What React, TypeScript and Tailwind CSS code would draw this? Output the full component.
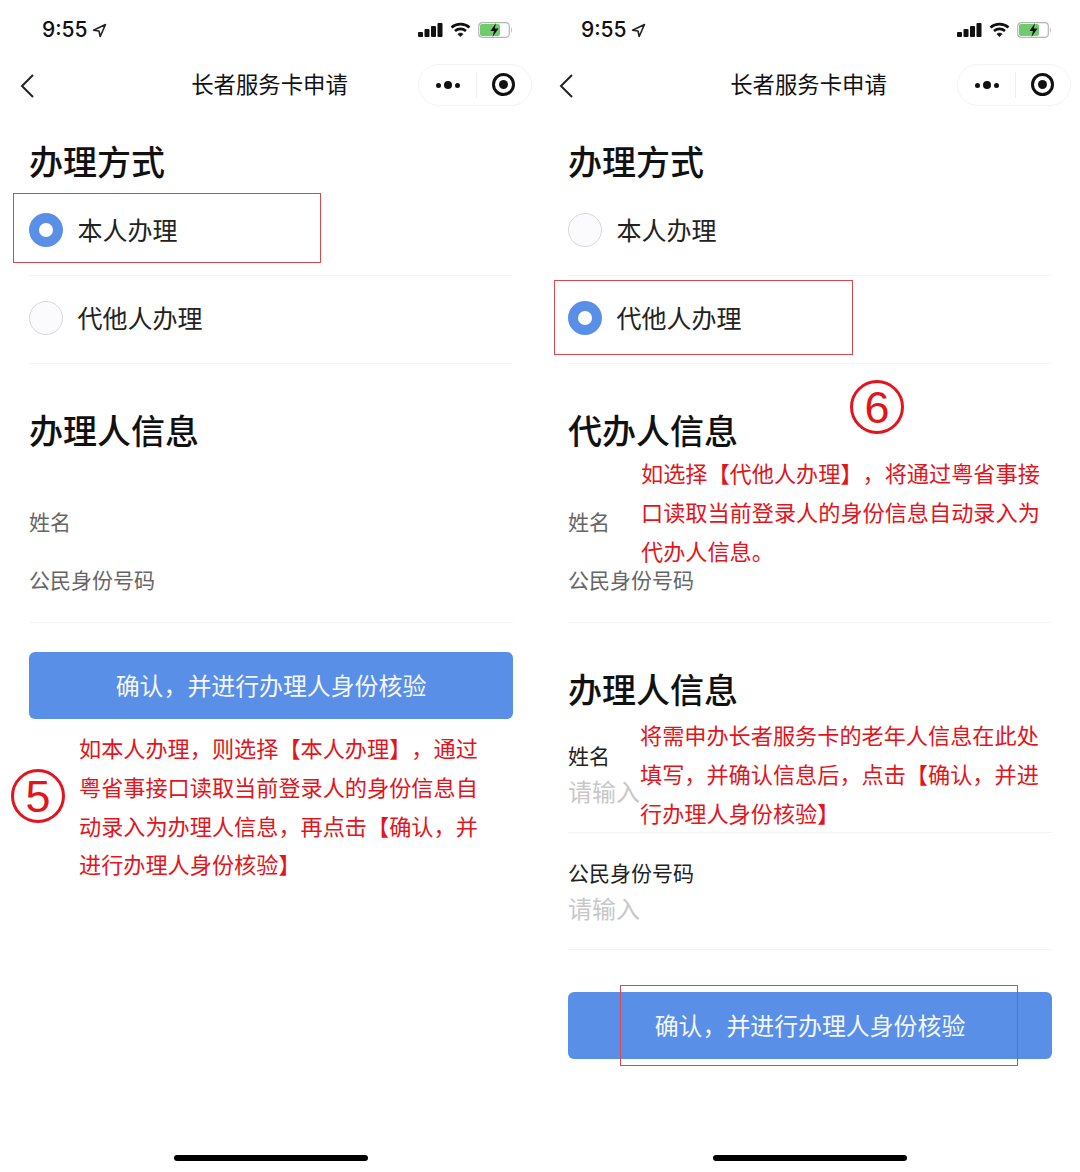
const FONT = "font-['Noto_Sans_CJK_SC','Noto_Sans',sans-serif]";

function StatusBar() {
  return (
    <div className="h-[64px] pl-[42px] pr-[26px] pt-[15px] flex items-start justify-between">
      <div className="flex items-center h-[30px] gap-[4px]">
        <span className="font-['Inter',sans-serif] text-[21px] font-medium leading-[30px] text-[#111]">9:55</span>
        <svg width="15" height="15" viewBox="0 0 15 15" fill="none" stroke="#222" strokeWidth="1.6" strokeLinejoin="round">
          <path d="M1.5 7.2 13.5 1.5 8.2 13.5 7 8z" />
        </svg>
      </div>
      <div className="flex items-center h-[30px] gap-[7px]">
        <svg width="25" height="16" viewBox="0 0 25 16" fill="#111">
          <rect x="0" y="10" width="5" height="5" rx="1" />
          <rect x="6.500" y="7" width="5" height="8" rx="1" />
          <rect x="13" y="4" width="5" height="11" rx="1" />
          <rect x="19.500" y="1" width="5" height="14" rx="1" />
        </svg>
        <svg width="21" height="16" viewBox="0 0 21 16" fill="none" stroke="#111" strokeWidth="2.600">
          <path d="M1.500 5.500C6.500 1 14.500 1 19.500 5.500" />
          <path d="M5 9c3.200-2.800 7.800-2.800 11 0" />
          <path d="M10.500 14.800 7.800 12c1.600-1.300 3.800-1.300 5.400 0z" fill="#111" strokeWidth="0.500" />
        </svg>
        <svg width="35" height="18" viewBox="0 0 35 18" fill="none">
          <rect x="0.700" y="1.700" width="30.600" height="14.600" rx="3.500" stroke="#b5b5b5" strokeWidth="1.200" />
          <rect x="2" y="3" width="20" height="12" rx="2" fill="#6fcb6c" />
          <path d="M33 6.500c1.200.4 1.200 4.600 0 5z" fill="#b5b5b5" />
          <path d="M18 2 12.500 10h3.500l-1.500 6 6-8.500h-3.700z" fill="#111" />
        </svg>
      </div>
    </div>
  );
}

function NavBar() {
  return (
    <div className="h-[42px] relative flex items-center justify-center">
      <svg className="absolute left-[20px] top-[9px]" width="15" height="26" viewBox="0 0 15 26" fill="none" stroke="#222" strokeWidth="2">
        <path d="M13 2 2 13l11 11" />
      </svg>
      <span className="text-[22.400px] leading-[30px] text-[#111] pb-[4px]">长者服务卡申请</span>
      <div className="absolute left-[418px] top-0 w-[114px] h-[42px] rounded-full border border-[#f3f3f3] flex items-center">
        <div className="w-[57px] flex items-center justify-center gap-[3px]">
          <span className="w-[5px] h-[5px] rounded-full bg-[#111]" />
          <span className="w-[8px] h-[8px] rounded-full bg-[#111]" />
          <span className="w-[5px] h-[5px] rounded-full bg-[#111]" />
        </div>
        <div className="w-px h-[26px] bg-[#eeeeee]" />
        <div className="flex-1 flex items-center justify-center pr-[2px] pb-[2px]">
          <div className="w-[23px] h-[23px] rounded-full border-[3px] border-[#111] flex items-center justify-center">
            <span className="w-[9px] h-[9px] rounded-full bg-[#111]" />
          </div>
        </div>
      </div>
    </div>
  );
}

function Heading({ children, className }: { children: string; className: string }) {
  return <div className={`h-[40px] text-[34px] leading-[40px] font-medium text-[#111] ${className}`}>{children}</div>;
}

function RadioRow({ label, checked }: { label: string; checked?: boolean }) {
  return (
    <div className="h-[88px] border-b border-[#f4f4f4] flex items-center gap-[14.500px]">
      {checked ? (
        <span className="w-[34px] h-[34px] rounded-full bg-[#5a8fe8] flex items-center justify-center mb-[4px]">
          <span className="w-[14px] h-[14px] rounded-full bg-white" />
        </span>
      ) : (
        <span className="w-[34px] h-[34px] rounded-full border border-[#d8d8d8] bg-[#fbfbfd] mb-[4px]" />
      )}
      <span className="text-[25px] leading-[34px] text-[#222] pb-[5px]">{label}</span>
    </div>
  );
}

function SubmitButton({ className }: { className: string }) {
  return (
    <div className={`h-[67px] rounded-[6px] bg-[#5a8fe8] flex items-center justify-center text-[23.900px] text-[#f4f7fd] pb-[2px] ${className}`}>
      确认，并进行办理人身份核验
    </div>
  );
}

function ReadonlyFields() {
  return (
    <div className="h-[117px] mt-[56px] border-b border-[#f4f4f4] text-[21px] leading-[30px] text-[#666]">
      <div>姓名</div>
      <div className="mt-[28px]">公民身份号码</div>
    </div>
  );
}

function InputField({ label, className }: { label: string; className: string }) {
  return (
    <div className={`h-[93px] border-b border-[#f4f4f4] ${className}`}>
      <div className="text-[21px] leading-[30px] text-[#222]">{label}</div>
      <div className="text-[24px] leading-[34px] text-[#c8c8c8] mt-[4px]">请输入</div>
    </div>
  );
}

function Note({ lines, className }: { lines: string[]; className: string }) {
  return (
    <div className={`absolute text-[22.170px] leading-[38.800px] text-[#e3141b] whitespace-nowrap [text-spacing-trim:space-all] ${className}`}>
      {lines.map((line) => (
        <div key={line}>{line}</div>
      ))}
    </div>
  );
}

function Marker({ n, className }: { n: string; className: string }) {
  return (
    <div className={`absolute w-[54px] h-[54px] rounded-full border-[3px] border-[#e3141b] flex items-center justify-center font-['Liberation_Sans',sans-serif] text-[45px] leading-none text-[#e3141b] ${className}`}>
      {n}
    </div>
  );
}

function RedBox({ className }: { className: string }) {
  return <div className={`absolute border border-[#d9474f] ${className}`} />;
}

function Phone({ children }: { children: React.ReactNode }) {
  return <div className="relative w-[539px] h-[1172px] shrink-0 flex flex-col">{children}</div>;
}

function HomeBar() {
  return <div className="mt-auto mb-[11px] ml-[174px] w-[194px] h-[6px] rounded-full bg-black" />;
}

export default function App() {
  return (
    <div className={`w-[1080px] h-[1172px] bg-white flex overflow-hidden ${FONT}`}>
      {/* left screen */}
      <Phone>
        <StatusBar />
        <NavBar />
        <div className="pl-[29px] w-[513px]">
          <Heading className="mt-[35px]">办理方式</Heading>
          <div className="mt-[7px]">
            <RadioRow label="本人办理" checked />
            <RadioRow label="代他人办理" />
          </div>
          <Heading className="mt-[46px]">办理人信息</Heading>
          <ReadonlyFields />
          <SubmitButton className="mt-[29px]" />
        </div>
        <HomeBar />
        <RedBox className="left-[13px] top-[193px] w-[308px] h-[70px]" />
        <Marker n="5" className="left-[11px] top-[769px]" />
        <Note
          className="left-[79px] top-[728px]"
          lines={[
            "如本人办理，则选择【本人办理】，通过",
            "粤省事接口读取当前登录人的身份信息自",
            "动录入为办理人信息，再点击【确认，并",
            "进行办理人身份核验】",
          ]}
        />
      </Phone>

      {/* right screen */}
      <Phone>
        <StatusBar />
        <NavBar />
        <div className="pl-[29px] w-[513px]">
          <Heading className="mt-[35px]">办理方式</Heading>
          <div className="mt-[7px]">
            <RadioRow label="本人办理" />
            <RadioRow label="代他人办理" checked />
          </div>
          <Heading className="mt-[46px]">代办人信息</Heading>
          <ReadonlyFields />
          <Heading className="mt-[46px]">办理人信息</Heading>
          <InputField label="姓名" className="mt-[31px]" />
          <InputField label="公民身份号码" className="mt-[24px]" />
          <SubmitButton className="mt-[42px]" />
        </div>
        <HomeBar />
        <RedBox className="left-[15px] top-[280px] w-[299px] h-[75px]" />
        <RedBox className="left-[81px] top-[985px] w-[398px] h-[81px]" />
        <Marker n="6" className="left-[311px] top-[380px]" />
        <Note
          className="left-[102px] top-[453px]"
          lines={[
            "如选择【代他人办理】，将通过粤省事接",
            "口读取当前登录人的身份信息自动录入为",
            "代办人信息。",
          ]}
        />
        <Note
          className="left-[101px] top-[715px]"
          lines={[
            "将需申办长者服务卡的老年人信息在此处",
            "填写，并确认信息后，点击【确认，并进",
            "行办理人身份核验】",
          ]}
        />
      </Phone>
    </div>
  );
}
